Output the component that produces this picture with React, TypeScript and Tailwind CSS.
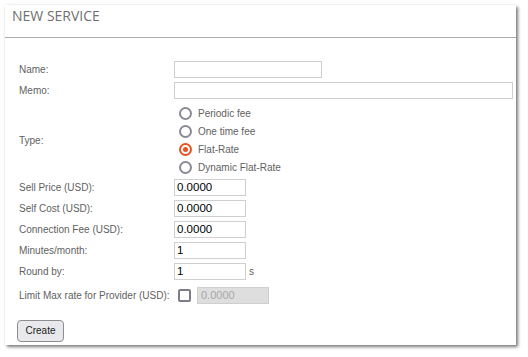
import type { ReactNode } from "react";

const labelFont = { fontFamily: '"Liberation Sans", Arial, sans-serif' };

const Row = ({ label, children, className = "" }: { label: string; children: ReactNode; className?: string }) => (
  <div className={`flex items-center ${className}`}>
    <div className="w-[155px] shrink-0 text-[10px] text-[#5f5f5f]">{label}</div>
    <div className="flex items-center">{children}</div>
  </div>
);

const TextBox = ({ value = "", w }: { value?: string; w: string }) => (
  <div className={`${w} h-[17px] border border-[#cfcfcf] bg-white px-[2px] flex items-center text-[11.5px] text-black`}>
    {value}
  </div>
);

const Radio = ({ label, checked = false }: { label: string; checked?: boolean }) => (
  <div className="h-[18px] flex items-center gap-[6px] pl-[5px]">
    <span
      className={`w-[13px] h-[13px] rounded-full border-2 flex items-center justify-center ${
        checked ? "border-[#e95420]" : "border-[#8a8a96]"
      }`}
    >
      {checked && <span className="w-[5px] h-[5px] rounded-full bg-[#e95420]" />}
    </span>
    <span className="text-[10px] text-[#5f5f5f]">{label}</span>
  </div>
);

export default function App() {
  return (
    <div className="w-[528px] h-[357px] bg-white pt-[5px] pl-[5px]" style={labelFont}>
      <div className="w-[511px] h-[340px] bg-white shadow-[2px_2px_3px_rgba(0,0,0,0.5),0_0_3px_rgba(0,0,0,0.08)] flex flex-col">
        <div className="h-[33px] border-b border-[#acacac] pl-[7px] pt-[1px]">
          <h1 className="text-[14px] leading-[20px] text-[#707070]" style={{ fontFamily: '"Open Sans", sans-serif' }}>
            NEW SERVICE
          </h1>
        </div>

        <div className="flex flex-col pl-[14px] pt-[23px]">
          <Row label="Name:">
            <TextBox w="w-[148px]" />
          </Row>
          <Row label="Memo:" className="mt-[4px]">
            <TextBox w="w-[339px]" />
          </Row>
          <Row label="Type:" className="mt-[5px]">
            <div className="flex flex-col">
              <Radio label="Periodic fee" />
              <Radio label="One time fee" />
              <Radio label="Flat-Rate" checked />
              <Radio label="Dynamic Flat-Rate" />
            </div>
          </Row>
          <Row label="Sell Price (USD):" className="mt-[3px]">
            <TextBox w="w-[72px]" value="0.0000" />
          </Row>
          <Row label="Self Cost (USD):" className="mt-[4px]">
            <TextBox w="w-[72px]" value="0.0000" />
          </Row>
          <Row label="Connection Fee (USD):" className="mt-[4px]">
            <TextBox w="w-[72px]" value="0.0000" />
          </Row>
          <Row label="Minutes/month:" className="mt-[4px]">
            <TextBox w="w-[72px]" value="1" />
          </Row>
          <Row label="Round by:" className="mt-[4px]">
            <TextBox w="w-[72px]" value="1" />
            <span className="ml-[3px] text-[10px] text-[#5f5f5f]">s</span>
          </Row>
          <Row label="Limit Max rate for Provider (USD):" className="mt-[7px]">
            <span className="ml-[4px] w-[13px] h-[13px] rounded-[2px] border-2 border-[#7d7d8a] bg-white" />
            <div className="ml-[6px] w-[72px] h-[17px] border border-[#cfcfcf] bg-[#dedede] px-[3px] flex items-center text-[11px] text-[#a8a8a8]">
              0.0000
            </div>
          </Row>
          <div className="mt-[13px] -ml-[2px]">
            <button className="w-[47px] h-[22px] rounded-[4px] border border-[#8d8d8d] bg-[#e9e9ed] text-[10px] text-[#222]">
              Create
            </button>
          </div>
        </div>
      </div>
    </div>
  );
}
